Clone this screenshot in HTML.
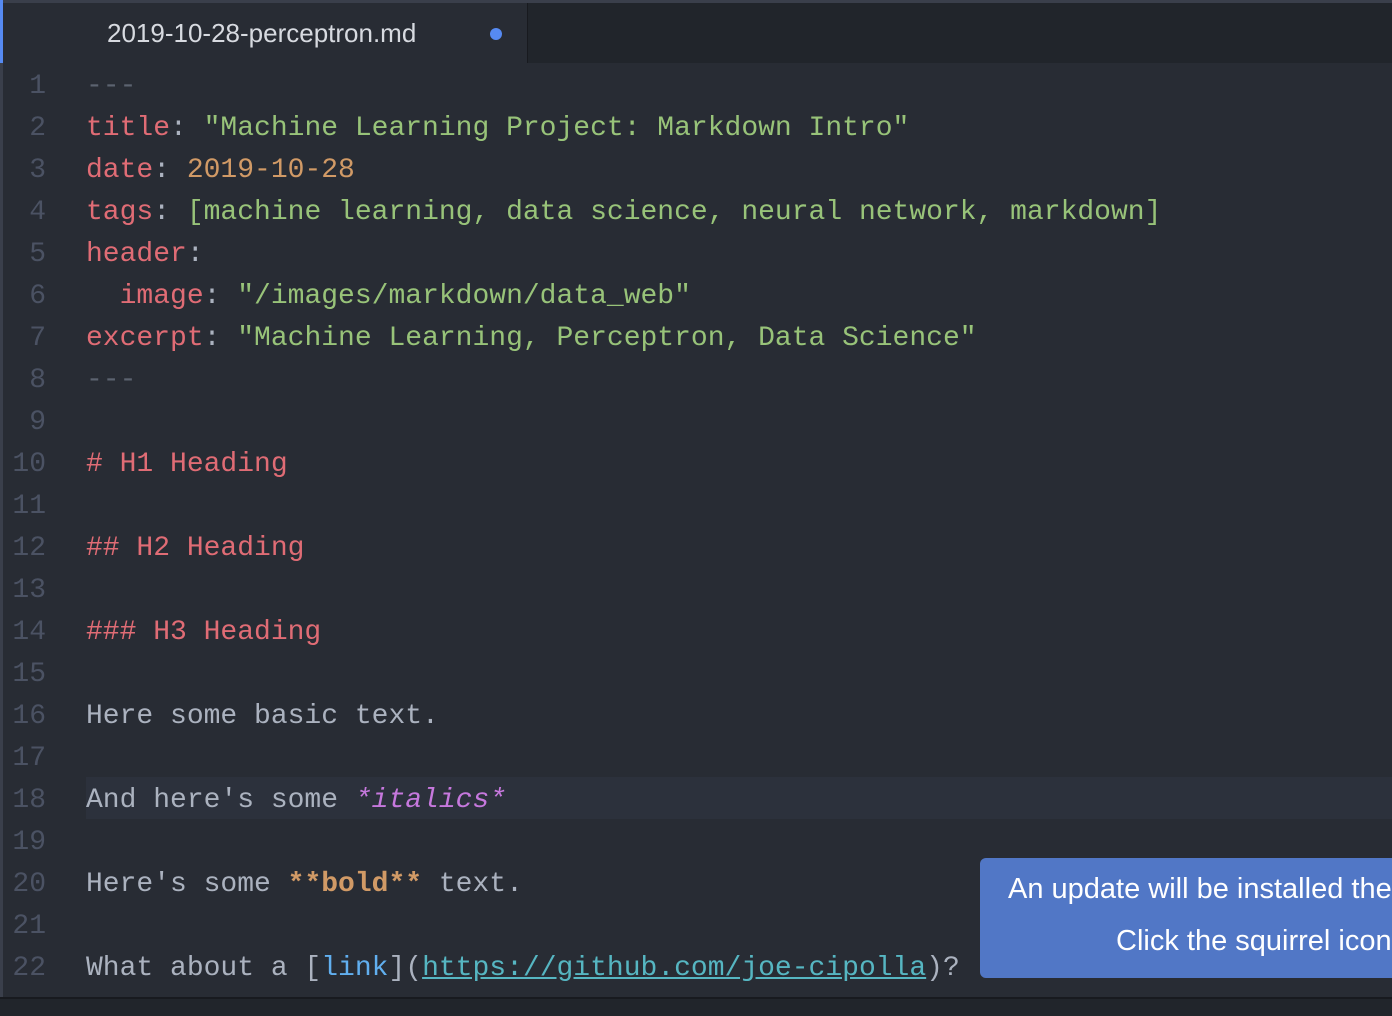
<!DOCTYPE html>
<html><head><meta charset="utf-8"><style>
body{margin:0;width:1392px;height:1014px;overflow:hidden;background:#282c34;position:relative;font-family:"Liberation Mono",monospace;}
.tabbar{position:absolute;left:0;top:0;width:1392px;height:63px;background:#21252b;border-top:3px solid #3a3f4b;box-sizing:border-box}
.tab{position:absolute;left:3px;top:3px;width:524px;height:60px;background:#282c34;border-right:1px solid #181a1f}
.tab span{position:absolute;left:104px;top:15px;font:26px "Liberation Sans",sans-serif;color:#d7dae0}
.dot{position:absolute;left:487px;top:25px;width:12px;height:12px;border-radius:50%;background:#568af2}
.stripe{position:absolute;left:0;top:0;width:3px;height:63px;background:#568af2}
.lb{position:absolute;left:0;top:63px;width:3px;height:935px;background:#3a3f4b}
.gut{position:absolute;left:0;top:66px;width:46px;text-align:right;color:#4b5263;font-size:28px;line-height:42px}
.code{position:absolute;left:86px;top:66px;color:#abb2bf;font-size:28px;line-height:42px;white-space:pre}
.hl{position:absolute;left:86px;top:777px;width:1306px;height:42px;background:#2c313c}
.r{color:#e06c75}.g{color:#98c379}.o{color:#d19a66}.c{color:#5c6370}.p{color:#c678dd;font-style:italic}.b{color:#61afef}.u{color:#56b6c2;text-decoration:underline}.ob{color:#d19a66;font-weight:bold}
.status{position:absolute;left:0;top:997px;width:1392px;height:17px;background:#21252b;border-top:2px solid #181a1f}
.note{position:absolute;left:980px;top:858px;width:430px;height:120px;background:#5177c6;border-radius:6px;color:#fff;font:29px "Liberation Sans",sans-serif}
.note div{position:absolute;white-space:nowrap}
</style></head><body>
<div class="tabbar"></div>
<div class="tab"><span>2019-10-28-perceptron.md</span><div class="dot"></div></div>
<div class="stripe"></div>
<div class="lb"></div>
<div class="hl"></div>
<div class="gut">1<br>2<br>3<br>4<br>5<br>6<br>7<br>8<br>9<br>10<br>11<br>12<br>13<br>14<br>15<br>16<br>17<br>18<br>19<br>20<br>21<br>22</div>
<div class="code"><span class="c">---</span>
<span class="r">title</span>: <span class="g">"Machine Learning Project: Markdown Intro"</span>
<span class="r">date</span>: <span class="o">2019-10-28</span>
<span class="r">tags</span>: <span class="g">[machine learning, data science, neural network, markdown]</span>
<span class="r">header</span>:
  <span class="r">image</span>: <span class="g">"/images/markdown/data_web"</span>
<span class="r">excerpt</span>: <span class="g">"Machine Learning, Perceptron, Data Science"</span>
<span class="c">---</span>

<span class="r"># H1 Heading</span>

<span class="r">## H2 Heading</span>

<span class="r">### H3 Heading</span>

Here some basic text.

And here's some <span class="p">*italics*</span>

Here's some <span class="ob">**bold**</span> text.

What about a [<span class="b">link</span>](<span class="u">https://github.com/joe-cipolla</span>)?</div>
<div class="status"></div>
<div class="note"><div style="left:28px;top:15px">An update will be installed the</div><div style="left:136px;top:67px">Click the squirrel icon</div></div>
</body></html>
